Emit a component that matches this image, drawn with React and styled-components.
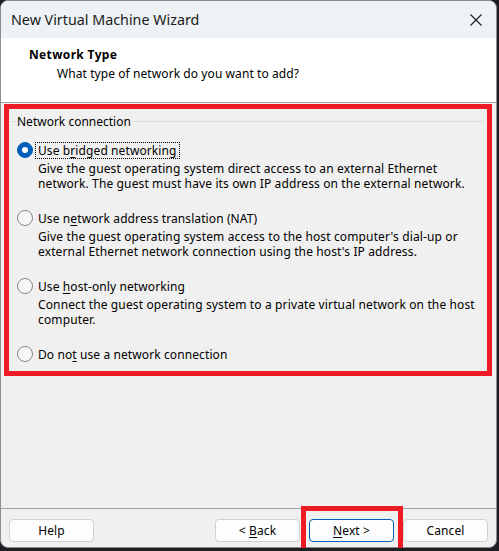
import React from "react";
import styled, { createGlobalStyle } from "styled-components";

const GlobalStyle = createGlobalStyle`
  html, body { margin: 0; padding: 0; background: #1d1f22; }
  body { font-family: "Noto Sans", "Liberation Sans", sans-serif; font-size: 12px; color: #000; }
  * { box-sizing: border-box; }
`;

const Window = styled.div`
  position: relative;
  width: 497px;
  height: 548px;
  border: 1px solid #8e8e8e;
  border-radius: 8px;
  background: #f0f0f0;
  display: flex;
  flex-direction: column;
`;

const TitleBar = styled.div`
  height: 37px;
  flex: none;
  display: flex;
  align-items: center;
  justify-content: space-between;
  padding: 0 14px 0 10px;
  background: #eef2f5;
  border-radius: 7px 7px 0 0;
`;

const TitleText = styled.div`
  font-size: 14.3px;
  color: #1b1b1b;
`;

const CloseIcon = styled.svg`
  width: 12px;
  height: 12px;
  display: block;
`;

const Header = styled.div`
  height: 65px;
  flex: none;
  background: #fff;
  border-bottom: 1px solid #a0a0a0;
  padding: 9px 0 0 28px;
`;

const HeaderTitle = styled.div`
  font-weight: 700;
  line-height: 16px;
  letter-spacing: 0.35px;
`;

const HeaderSub = styled.div`
  line-height: 16px;
  margin: 3px 0 0 28px;
  letter-spacing: 0.08px;
`;

const Body = styled.div`
  flex: 1;
  padding: 1px 4px 0 3px;
`;

const RedBox = styled.div`
  height: 272px;
  border: 5px solid #ed1c24;
  padding: 4px 4px 0 1px;
`;

const Legend = styled.div`
  display: flex;
  align-items: center;
  height: 16px;
  &::before {
    content: "";
    width: 6px;
    height: 1px;
    background: #dcdcdc;
    margin-right: 1px;
  }
  &::after {
    content: "";
    flex: 1;
    height: 1px;
    background: #dcdcdc;
    margin-left: 3px;
  }
`;

const Options = styled.div`
  display: flex;
  flex-direction: column;
  padding: 13px 0 0 7px;
`;

const Option = styled.div`
  height: 68px;
`;

const OptionRow = styled.div`
  display: flex;
  align-items: center;
  height: 16px;
`;

const Radio = styled.span`
  width: 16px;
  height: 16px;
  border-radius: 50%;
  flex: none;
  display: flex;
  align-items: center;
  justify-content: center;
  border: 1px solid ${(p) => (p.$checked ? "#005fb8" : "#858585")};
  background: ${(p) => (p.$checked ? "#005fb8" : "#f7f7f7")};
  &::after {
    content: "";
    width: 6px;
    height: 6px;
    border-radius: 50%;
    background: #fff;
    display: ${(p) => (p.$checked ? "block" : "none")};
  }
`;

const RadioLabel = styled.span`
  margin-left: 2px;
  padding: 0 2px;
  line-height: 15px;
  letter-spacing: 0.1px;
  border: 1px dotted ${(p) => (p.$focus ? "#000" : "transparent")};
`;

const Mn = styled.u`
  text-decoration: underline;
  text-underline-offset: 2px;
`;

const Desc = styled.div`
  margin: 3px 0 0 21px;
  line-height: 15px;
  letter-spacing: 0.13px;
  white-space: pre-line;
`;

const Footer = styled.div`
  flex: none;
  height: 39px;
  border-top: 1px solid #a0a0a0;
  display: flex;
  align-items: flex-start;
  padding: 10px 8px 0 8px;
  border-radius: 0 0 7px 7px;
`;

const Button = styled.button`
  width: 85px;
  height: 23px;
  font-family: inherit;
  font-size: 12px;
  letter-spacing: 0.1px;
  color: #000;
  background: #fdfdfd;
  border: 1px solid ${(p) => (p.$primary ? "#005fb8" : "#d0d0d0")};
  border-radius: 4px;
  padding: 0;
  margin-left: ${(p) => p.$ml || 0}px;
  line-height: 20px;
`;

const Annotation = styled.div`
  position: absolute;
  left: 300px;
  top: 505px;
  width: 102px;
  height: 52px;
  border: 5px solid #ed1c24;
  pointer-events: none;
`;

const options = [
  {
    label: (
      <>
        Use b<Mn>r</Mn>idged networking
      </>
    ),
    desc:
      "Give the guest operating system direct access to an external Ethernet\nnetwork. The guest must have its own IP address on the external network.",
    checked: true,
  },
  {
    label: (
      <>
        Use n<Mn>e</Mn>twork address translation (NAT)
      </>
    ),
    desc:
      "Give the guest operating system access to the host computer's dial-up or\nexternal Ethernet network connection using the host's IP address.",
  },
  {
    label: (
      <>
        Use <Mn>h</Mn>ost-only networking
      </>
    ),
    desc:
      "Connect the guest operating system to a private virtual network on the host\ncomputer.",
  },
  {
    label: (
      <>
        Do no<Mn>t</Mn> use a network connection
      </>
    ),
  },
];

export default function App() {
  return (
    <>
      <GlobalStyle />
      <Window>
        <TitleBar>
          <TitleText>New Virtual Machine Wizard</TitleText>
          <CloseIcon viewBox="0 0 12 12">
            <path d="M0.5 0.5 L11.5 11.5 M11.5 0.5 L0.5 11.5" stroke="#1b1b1b" strokeWidth="1.1" fill="none" />
          </CloseIcon>
        </TitleBar>
        <Header>
          <HeaderTitle>Network Type</HeaderTitle>
          <HeaderSub>What type of network do you want to add?</HeaderSub>
        </Header>
        <Body>
          <RedBox>
            <Legend>Network connection</Legend>
            <Options>
              {options.map((o, i) => (
                <Option key={i}>
                  <OptionRow>
                    <Radio $checked={o.checked} />
                    <RadioLabel $focus={o.checked}>{o.label}</RadioLabel>
                  </OptionRow>
                  {o.desc && <Desc>{o.desc}</Desc>}
                </Option>
              ))}
            </Options>
          </RedBox>
        </Body>
        <Footer>
          <Button>Help</Button>
          <Button $ml={121}>
            &lt; <Mn>B</Mn>ack
          </Button>
          <Button $primary $ml={9}>
            <Mn>N</Mn>ext &gt;
          </Button>
          <Button $ml={9}>Cancel</Button>
        </Footer>
        <Annotation />
      </Window>
    </>
  );
}
